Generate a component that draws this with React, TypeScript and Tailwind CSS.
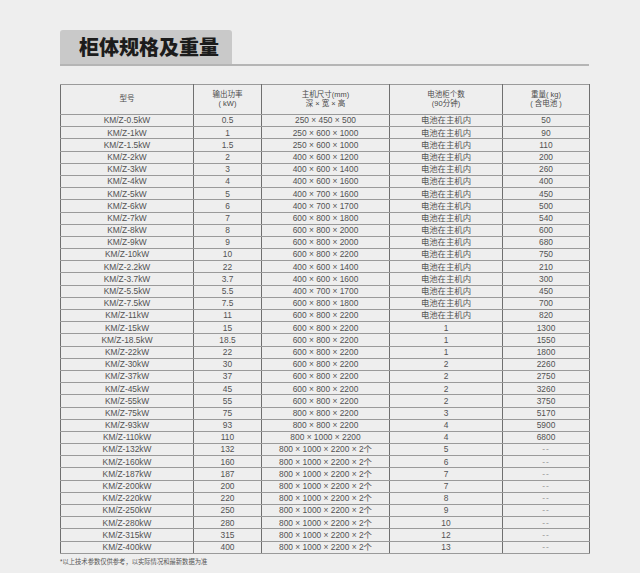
const rows: [string, string, string, string, string][] = [
  ["KM/Z-0.5kW", "0.5", "250 × 450 × 500", "电池在主机内", "50"],
  ["KM/Z-1kW", "1", "250 × 600 × 1000", "电池在主机内", "90"],
  ["KM/Z-1.5kW", "1.5", "250 × 600 × 1000", "电池在主机内", "110"],
  ["KM/Z-2kW", "2", "400 × 600 × 1200", "电池在主机内", "200"],
  ["KM/Z-3kW", "3", "400 × 600 × 1400", "电池在主机内", "260"],
  ["KM/Z-4kW", "4", "400 × 600 × 1600", "电池在主机内", "400"],
  ["KM/Z-5kW", "5", "400 × 700 × 1600", "电池在主机内", "450"],
  ["KM/Z-6kW", "6", "400 × 700 × 1700", "电池在主机内", "500"],
  ["KM/Z-7kW", "7", "600 × 800 × 1800", "电池在主机内", "540"],
  ["KM/Z-8kW", "8", "600 × 800 × 2000", "电池在主机内", "600"],
  ["KM/Z-9kW", "9", "600 × 800 × 2000", "电池在主机内", "680"],
  ["KM/Z-10kW", "10", "600 × 800 × 2200", "电池在主机内", "750"],
  ["KM/Z-2.2kW", "22", "400 × 600 × 1400", "电池在主机内", "210"],
  ["KM/Z-3.7kW", "3.7", "400 × 600 × 1600", "电池在主机内", "300"],
  ["KM/Z-5.5kW", "5.5", "400 × 700 × 1700", "电池在主机内", "450"],
  ["KM/Z-7.5kW", "7.5", "600 × 800 × 1800", "电池在主机内", "700"],
  ["KM/Z-11kW", "11", "600 × 800 × 2200", "电池在主机内", "820"],
  ["KM/Z-15kW", "15", "600 × 800 × 2200", "1", "1300"],
  ["KM/Z-18.5kW", "18.5", "600 × 800 × 2200", "1", "1550"],
  ["KM/Z-22kW", "22", "600 × 800 × 2200", "1", "1800"],
  ["KM/Z-30kW", "30", "600 × 800 × 2200", "2", "2260"],
  ["KM/Z-37kW", "37", "600 × 800 × 2200", "2", "2750"],
  ["KM/Z-45kW", "45", "600 × 800 × 2200", "2", "3260"],
  ["KM/Z-55kW", "55", "600 × 800 × 2200", "2", "3750"],
  ["KM/Z-75kW", "75", "800 × 800 × 2200", "3", "5170"],
  ["KM/Z-93kW", "93", "800 × 800 × 2200", "4", "5900"],
  ["KM/Z-110kW", "110", "800 × 1000 × 2200", "4", "6800"],
  ["KM/Z-132kW", "132", "800 × 1000 × 2200 × 2个", "5", "--"],
  ["KM/Z-160kW", "160", "800 × 1000 × 2200 × 2个", "6", "--"],
  ["KM/Z-187kW", "187", "800 × 1000 × 2200 × 2个", "7", "--"],
  ["KM/Z-200kW", "200", "800 × 1000 × 2200 × 2个", "7", "--"],
  ["KM/Z-220kW", "220", "800 × 1000 × 2200 × 2个", "8", "--"],
  ["KM/Z-250kW", "250", "800 × 1000 × 2200 × 2个", "9", "--"],
  ["KM/Z-280kW", "280", "800 × 1000 × 2200 × 2个", "10", "--"],
  ["KM/Z-315kW", "315", "800 × 1000 × 2200 × 2个", "12", "--"],
  ["KM/Z-400kW", "400", "800 × 1000 × 2200 × 2个", "13", "--"],
];

const font = { fontFamily: '"Liberation Sans", "Noto Sans CJK SC", sans-serif' };

const cell = "border-x border-x-[#6f6f6f] border-y border-y-[#9a9a9a] p-0 text-center align-middle";

export default function App() {
  return (
    <div className="w-[640px] h-[573px] bg-[#eeeeee] pt-[30px] px-[60px] overflow-hidden" style={font}>
      <div className="w-[529px] flex border-b-2 border-[#b5b5b5]">
        <div className="w-[172px] h-[34px] bg-[#c9c9c9] rounded-t-[3px] pl-[19px] flex items-center">
          <span className="text-[20px] font-black text-[#1c1c1c]" style={{ fontFamily: '"Noto Sans CJK SC", sans-serif' }}>
            柜体规格及重量
          </span>
        </div>
      </div>

      <table className="mt-[18px] w-[529px] table-fixed border-collapse border border-[#b8b8b8] text-[#525252]">
        <colgroup>
          <col className="w-[133px]" />
          <col className="w-[68px]" />
          <col className="w-[128px]" />
          <col className="w-[113px]" />
          <col className="w-[87px]" />
        </colgroup>
        <thead>
          <tr className="h-[30px] text-[7.5px] leading-[1.15] text-[#4a4a4a]">
            <th className={`${cell} font-normal`}>型号</th>
            <th className={`${cell} font-normal`}>
              <div>输出功率</div>
              <div>( kW)</div>
            </th>
            <th className={`${cell} font-normal`}>
              <div>主机尺寸(mm)</div>
              <div>深 × 宽 × 高</div>
            </th>
            <th className={`${cell} font-normal`}>
              <div>电池柜个数</div>
              <div>(90分钟)</div>
            </th>
            <th className={`${cell} font-normal`}>
              <div>重量( kg)</div>
              <div>( 含电池 )</div>
            </th>
          </tr>
        </thead>
        <tbody>
          {rows.map((r) => (
            <tr key={r[0]} className="h-[12.2px] text-[8.4px] leading-none">
              {r.map((v, i) => (
                <td key={i} className={`${cell} ${v === "--" ? "text-[#9a9a9a] tracking-[1px]" : ""}`}>
                  {v}
                </td>
              ))}
            </tr>
          ))}
        </tbody>
      </table>

      <p className="mt-[5px] text-[6.3px] text-[#555] leading-none">*以上技术参数仅供参考，以实际情况和最新数据为准</p>
    </div>
  );
}
